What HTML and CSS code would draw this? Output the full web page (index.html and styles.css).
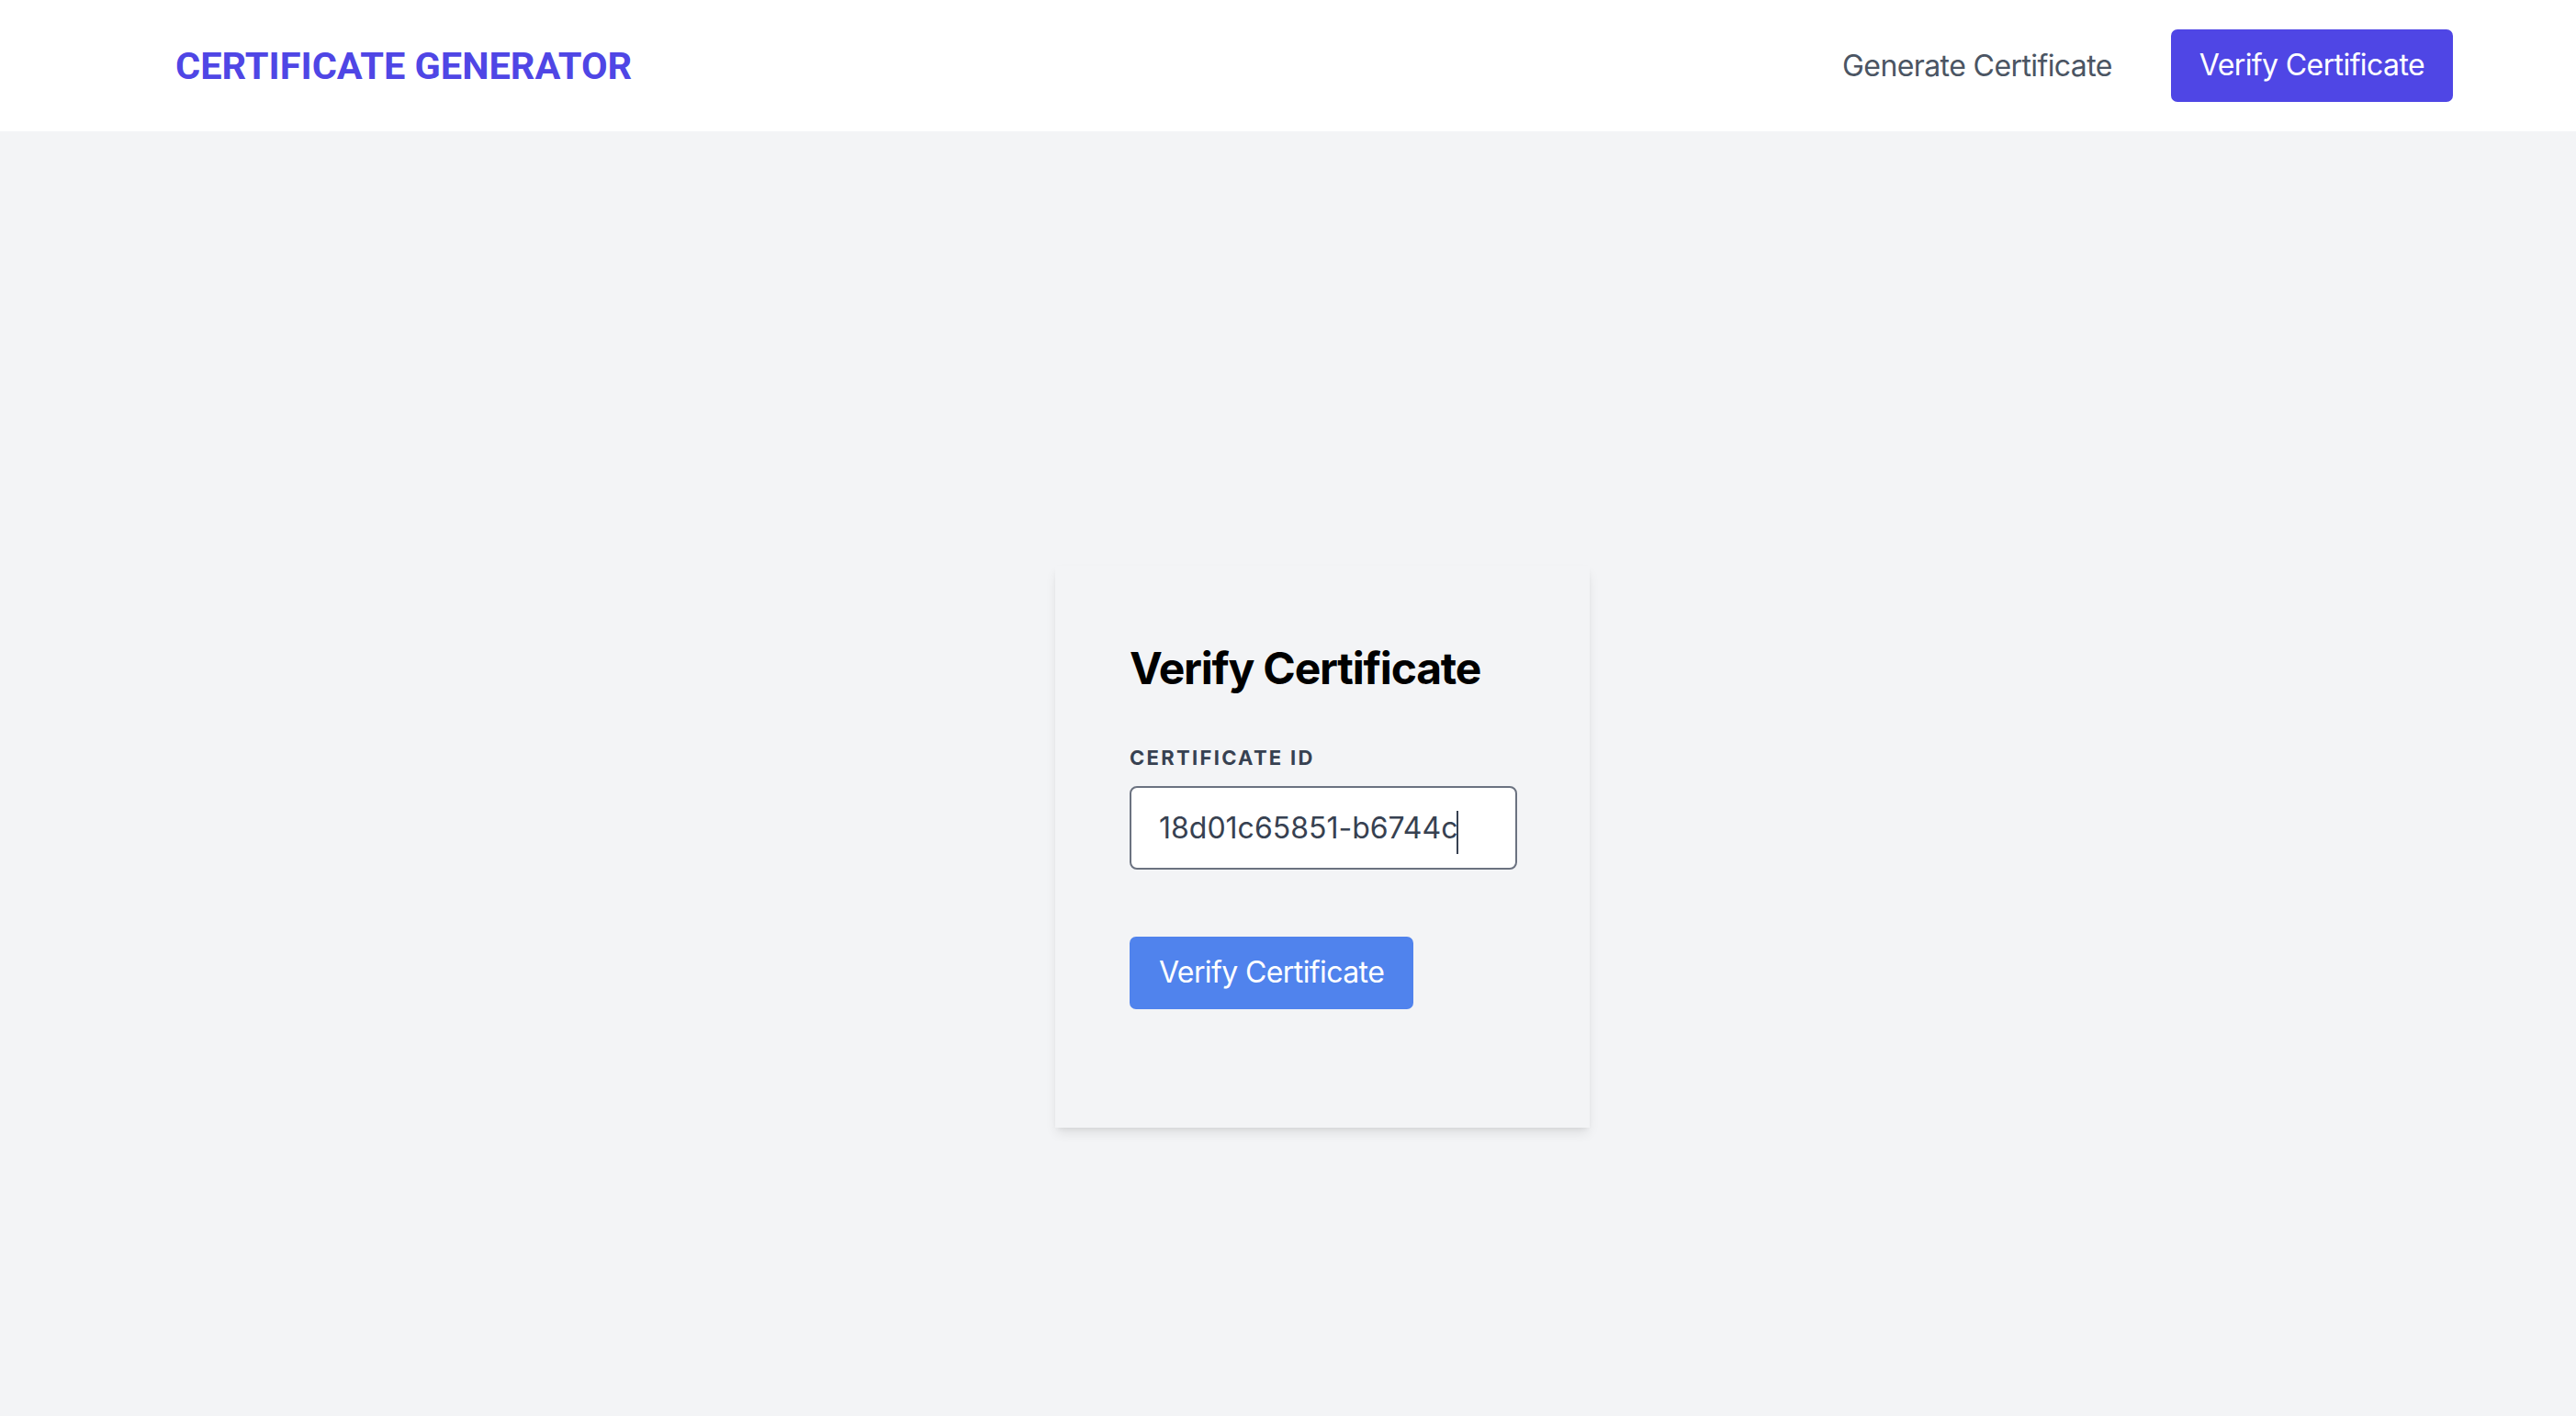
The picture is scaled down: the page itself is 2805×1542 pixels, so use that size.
FILE: index.html
```html
<!DOCTYPE html>
<html lang="en">
<head>
<meta charset="utf-8">
<title>Certificate Generator</title>
<link rel="stylesheet" href="styles.css">
</head>
<body>
<header class="topbar">
  <a class="logo" href="#">CERTIFICATE GENERATOR</a>
  <nav class="nav">
    <a class="nav-link" href="#">Generate Certificate</a>
    <a class="nav-btn" href="#">Verify Certificate</a>
  </nav>
</header>
<main class="main">
  <section class="card">
    <h1 class="card-title">Verify Certificate</h1>
    <label class="field-label" for="cid">CERTIFICATE ID</label>
    <div class="input-wrap">
      <input id="cid" class="field-input" type="text" value="18d01c65851-b6744c">
      <span class="caret"></span>
    </div>
    <button class="submit-btn" type="button">Verify Certificate</button>
  </section>
</main>
</body>
</html>
```
FILE: styles.css
```css
html, body {
  margin: 0;
  padding: 0;
}
body {
  background: #f3f4f6;
  font-family: "Inter", "Noto Sans", sans-serif;
  min-height: 1542px;
}
a { text-decoration: none; }

.topbar {
  height: 143px;
  background: #ffffff;
  display: flex;
  align-items: center;
  justify-content: space-between;
  padding: 0 134px 0 191px;
  box-sizing: border-box;
}
.logo {
  font-family: "Roboto", "Inter", sans-serif;
  font-weight: 700;
  font-size: 41.5px;
  color: #4f46e5;
}
.nav {
  display: flex;
  align-items: center;
  gap: 64px;
}
.nav-link {
  font-size: 32px;
  letter-spacing: -0.6px;
  color: #4b5563;
  line-height: 50px;
}
.nav-btn {
  font-size: 32px;
  letter-spacing: -0.6px;
  line-height: 50px;
  color: #ffffff;
  background: #4f46e5;
  padding: 14px 31px 15px;
  border-radius: 7px;
}

.main {
  display: flex;
  justify-content: center;
  padding: 473px 0 0 75px;
}
.card {
  width: 582px;
  box-sizing: border-box;
  background: #f3f4f6;
  padding: 80px 81px 129px;
  box-shadow: 0 7px 12px -2px rgba(0,0,0,0.10), 0 3px 6px -3px rgba(0,0,0,0.08);
  display: flex;
  flex-direction: column;
  align-items: flex-start;
}
.card-title {
  margin: 0;
  font-size: 48px;
  line-height: 64px;
  font-weight: 700;
  letter-spacing: -1.2px;
  color: #000000;
}
.field-label {
  margin-top: 49px;
  font-size: 22px;
  line-height: 32px;
  font-weight: 700;
  letter-spacing: 2.3px;
  color: #374151;
}
.input-wrap {
  position: relative;
  margin-top: 15px;
  width: 422px;
}
.field-input {
  display: block;
  width: 422px;
  height: 91px;
  box-sizing: border-box;
  border: 2px solid #6b7280;
  border-radius: 8px;
  background: #ffffff;
  padding: 0 30px;
  font-family: "Inter", "Noto Sans", sans-serif;
  font-size: 32px;
  color: #374151;
  outline: none;
}
.caret {
  position: absolute;
  left: 356px;
  top: 27px;
  width: 2px;
  height: 47px;
  background: #374151;
}
.submit-btn {
  margin-top: 73px;
  border: none;
  border-radius: 7px;
  background: #5083ed;
  color: #ffffff;
  font-family: "Inter", "Noto Sans", sans-serif;
  font-size: 32px;
  letter-spacing: -0.6px;
  line-height: 50px;
  padding: 14px 32px 15px;
  cursor: pointer;
}
```
